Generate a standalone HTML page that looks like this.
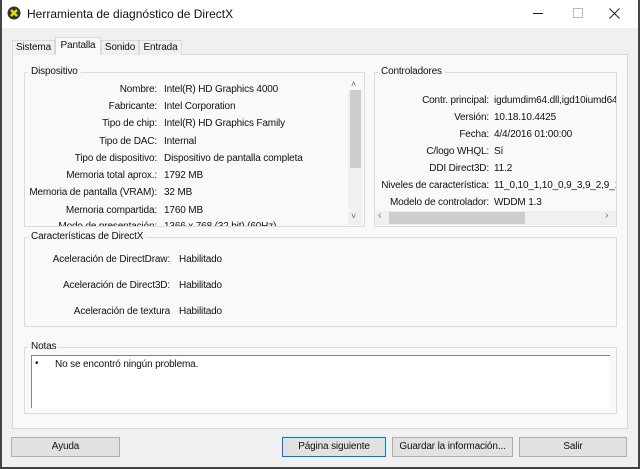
<!DOCTYPE html>
<html><head><meta charset="utf-8"><style>
*{margin:0;padding:0;box-sizing:border-box}
body{width:640px;height:469px;overflow:hidden;background:#f0f0f0;font-family:"Liberation Sans",sans-serif;font-size:10px;letter-spacing:-0.15px;color:#111;position:relative}
.a{position:absolute;white-space:nowrap}
.r{position:absolute;text-align:right;white-space:nowrap}
.g{position:absolute;border:1px solid #dcdcdc}
.lg{position:absolute;background:#f7f7f7;padding:0 3px}
.btn{position:absolute;height:20px;border:1px solid #adadad;background:#e1e1e1;text-align:center;line-height:18px}
</style></head><body>
<div class="a" style="left:0;top:0;width:640px;height:28px;background:#fff"></div>
<div class="a" style="left:0;top:0;width:2px;height:469px;background:#444"></div>
<div class="a" style="left:638px;top:0;width:2px;height:469px;background:#444"></div>
<div class="a" style="left:0;top:467px;width:640px;height:2px;background:#444"></div>
<svg class="a" style="left:7px;top:6px" width="14" height="14"><circle cx="7" cy="7" r="6.5" fill="#333"/><path d="M4 4L10 10M10 4L4 10" stroke="#e8d800" stroke-width="2.5"/></svg>
<div class="a" style="left:27px;top:7px;font-size:12px;letter-spacing:0">Herramienta de diagnóstico de DirectX</div>
<div class="a" style="left:533px;top:13px;width:10px;height:1px;background:#222"></div>
<div class="a" style="left:573px;top:8px;width:10px;height:10px;border:1px solid #bbb"></div>
<svg class="a" style="left:609px;top:8px" width="11" height="11"><path d="M0.5 0.5L10.5 10.5M10.5 0.5L0.5 10.5" stroke="#222"/></svg>

<div class="a" style="left:12px;top:54px;width:616px;height:375px;border:1px solid #d9d9d9;background:#f9f9f9"></div>
<div class="a" style="left:12px;top:40px;width:43px;height:15px;border:1px solid #d9d9d9;border-bottom:none;background:#f0f0f0;text-align:center;line-height:14px">Sistema</div>
<div class="a" style="left:55px;top:37px;width:46px;height:18px;border:1px solid #d9d9d9;border-bottom:none;background:#f9f9f9;text-align:center;line-height:15px">Pantalla</div>
<div class="a" style="left:101px;top:40px;width:38px;height:15px;border:1px solid #d9d9d9;border-bottom:none;background:#f0f0f0;text-align:center;line-height:14px">Sonido</div>
<div class="a" style="left:139px;top:40px;width:43px;height:15px;border:1px solid #d9d9d9;border-bottom:none;background:#f0f0f0;text-align:center;line-height:14px">Entrada</div>

<div class="g" style="left:24px;top:72px;width:341px;height:155px"></div>
<div class="lg" style="left:28px;top:66px">Dispositivo</div>
<div class="a" style="left:348px;top:90px;width:14px;height:135px;background:#f0f0f0"></div>
<div class="a" style="left:350px;top:90px;width:11px;height:78px;background:#cdcdcd"></div>
<div class="a" style="left:351px;top:79px;font-size:9px;color:#666">˄</div>
<div class="a" style="left:351px;top:211px;font-size:9px;color:#666">˅</div>
<div style="position:absolute;left:25px;top:0;width:322px;height:226px;overflow:hidden">
<div class="r" style="right:190px;top:84px">Nombre:</div><div class="a" style="left:139px;top:84px">Intel(R) HD Graphics 4000</div>
<div class="r" style="right:190px;top:101px">Fabricante:</div><div class="a" style="left:139px;top:101px">Intel Corporation</div>
<div class="r" style="right:190px;top:118px">Tipo de chip:</div><div class="a" style="left:139px;top:118px">Intel(R) HD Graphics Family</div>
<div class="r" style="right:190px;top:136px">Tipo de DAC:</div><div class="a" style="left:139px;top:136px">Internal</div>
<div class="r" style="right:190px;top:153px">Tipo de dispositivo:</div><div class="a" style="left:139px;top:153px">Dispositivo de pantalla completa</div>
<div class="r" style="right:190px;top:170px">Memoria total aprox.:</div><div class="a" style="left:139px;top:170px">1792 MB</div>
<div class="r" style="right:190px;top:187px">Memoria de pantalla (VRAM):</div><div class="a" style="left:139px;top:187px">32 MB</div>
<div class="r" style="right:190px;top:205px">Memoria compartida:</div><div class="a" style="left:139px;top:205px">1760 MB</div>
<div class="r" style="right:190px;top:221px">Modo de presentación:</div><div class="a" style="left:139px;top:221px">1366 x 768 (32 bit) (60Hz)</div>
</div>

<div class="g" style="left:374px;top:72px;width:243px;height:155px"></div>
<div class="lg" style="left:378px;top:66px">Controladores</div>
<div style="position:absolute;left:375px;top:0;width:241px;height:226px;overflow:hidden">
<div class="r" style="right:127px;top:95px">Contr. principal:</div><div class="a" style="left:119px;top:95px">igdumdim64.dll,igd10iumd64.dll</div>
<div class="r" style="right:127px;top:112px">Versión:</div><div class="a" style="left:119px;top:112px">10.18.10.4425</div>
<div class="r" style="right:127px;top:129px">Fecha:</div><div class="a" style="left:119px;top:129px">4/4/2016 01:00:00</div>
<div class="r" style="right:127px;top:146px">C/logo WHQL:</div><div class="a" style="left:119px;top:146px">Sí</div>
<div class="r" style="right:127px;top:163px">DDI Direct3D:</div><div class="a" style="left:119px;top:163px">11.2</div>
<div class="r" style="right:127px;top:180px">Niveles de característica:</div><div class="a" style="left:119px;top:180px">11_0,10_1,10_0,9_3,9_2,9_1</div>
<div class="r" style="right:127px;top:197px">Modelo de controlador:</div><div class="a" style="left:119px;top:197px">WDDM 1.3</div>
<div class="a" style="left:0;top:211px;width:241px;height:14px;background:#f0f0f0"></div>
<div class="a" style="left:14px;top:212px;width:136px;height:12px;background:#cdcdcd"></div>
<div class="a" style="left:3px;top:210px;font-size:10px;color:#666">‹</div>
<div class="a" style="left:230px;top:210px;font-size:10px;color:#666">›</div>
</div>

<div class="g" style="left:24px;top:237px;width:593px;height:90px"></div>
<div class="lg" style="left:28px;top:231px">Características de DirectX</div>
<div class="r" style="right:470px;top:254px">Aceleración de DirectDraw:</div><div class="a" style="left:179px;top:254px">Habilitado</div>
<div class="r" style="right:470px;top:280px">Aceleración de Direct3D:</div><div class="a" style="left:179px;top:280px">Habilitado</div>
<div class="r" style="right:470px;top:306px">Aceleración de textura</div><div class="a" style="left:179px;top:306px">Habilitado</div>

<div class="g" style="left:24px;top:347px;width:593px;height:67px"></div>
<div class="lg" style="left:28px;top:341px">Notas</div>
<div class="a" style="left:31px;top:355px;width:579px;height:53px;background:#fff;border-top:1px solid #828282;border-left:1px solid #828282"></div>
<div class="a" style="left:35px;top:358px">•</div>
<div class="a" style="left:55px;top:359px">No se encontró ningún problema.</div>

<div class="btn" style="left:11px;top:437px;width:109px">Ayuda</div>
<div class="btn" style="left:282px;top:437px;width:104px;border:1px solid #0078d7">Página siguiente</div>
<div class="btn" style="left:392px;top:437px;width:121px">Guardar la información...</div>
<div class="btn" style="left:519px;top:437px;width:108px">Salir</div>
</body></html>
